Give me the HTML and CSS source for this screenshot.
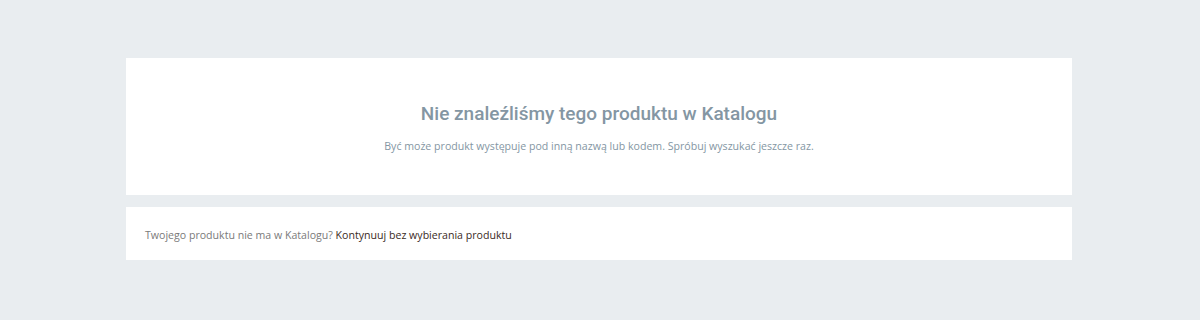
FILE: index.html
```html
<!DOCTYPE html>
<html lang="pl">
<head>
<meta charset="utf-8">
<link rel="stylesheet" href="styles.css">
</head>
<body>
<main class="wrap">
  <section class="card empty">
    <h2 class="empty-title">Nie znaleźliśmy tego produktu w Katalogu</h2>
    <p class="empty-text">Być może produkt występuje pod inną nazwą lub kodem. Spróbuj wyszukać jeszcze raz.</p>
  </section>
  <section class="card footer">
    <p class="footer-text">Twojego produktu nie ma w Katalogu? <a href="#" class="footer-link">Kontynuuj bez wybierania produktu</a></p>
  </section>
</main>
</body>
</html>
```
FILE: styles.css
```css
html, body {
  margin: 0;
  padding: 0;
  background: #e9edf0;
}
body {
  font-family: "Open Sans", "Liberation Sans", sans-serif;
}
.wrap {
  width: 946px;
  margin-left: calc(50% - 474px);
  padding-top: 58px;
  display: flex;
  flex-direction: column;
  gap: 12px;
}
.card {
  background: #fff;
}
.empty {
  height: 137px;
  box-sizing: border-box;
  padding-top: 44px;
  text-align: center;
}
.empty-title {
  margin: 0;
  font-family: Roboto, "Liberation Sans", sans-serif;
  font-weight: 500;
  font-size: 19px;
  line-height: 24px;
  color: #8496a3;
}
.empty-text {
  margin: 12px 0 0;
  font-size: 10.6px;
  line-height: 16px;
  color: #8496a3;
}
.footer {
  height: 53px;
  box-sizing: border-box;
  padding: 2px 19px 0;
  display: flex;
  align-items: center;
}
.footer-text {
  margin: 0;
  font-size: 10.6px;
  line-height: 16px;
  color: #7a7a7a;
}
.footer-link {
  color: #3a2a24;
  text-decoration: none;
}
```
